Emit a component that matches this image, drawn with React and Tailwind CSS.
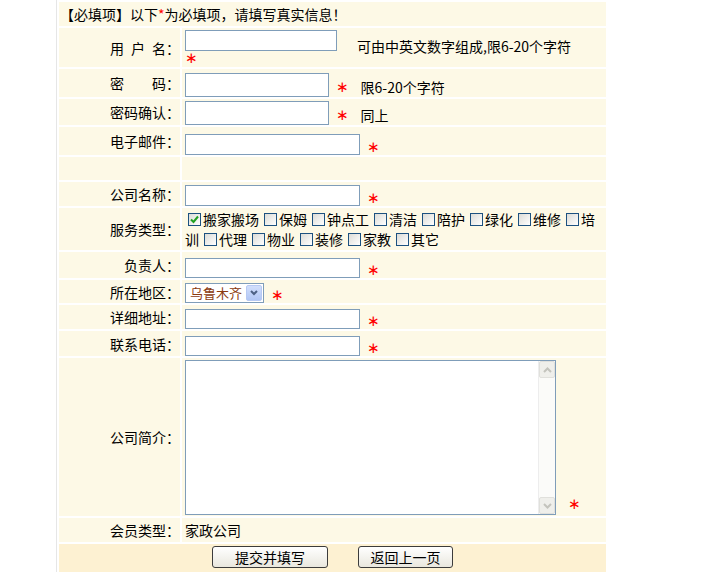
import React from "react";

const cell = "bg-[#fdf9e6]";

const Star = ({ className = "leading-[20px]" }) => (
    <span className={`font-['DejaVu_Sans',sans-serif] text-[15px] text-[#ff0000] ${className}`}>∗</span>
);

const Box = ({ w, h = 21 }) => (
    <input type="text" className="shrink-0 border border-[#7f9db9] bg-white outline-none" style={{ width: w, height: h }} />
);

const Row = ({ label, h, className = "", children }) => (
    <>
        <div className={`${cell} ${h} flex items-center justify-end whitespace-pre`}>{label}</div>
        <div className={`${cell} ${h} pl-[3px] ${className}`}>{children}</div>
    </>
);

const Check = ({ on }) => (
    <span className="mr-[2px] inline-flex h-[13px] w-[13px] shrink-0 items-center justify-center border border-[#1c5180] bg-linear-to-br from-[#dcdcd7] to-white">
        {on && (
            <svg width="9" height="9" viewBox="0 0 9 9">
                <path d="M1 4.5 L3.5 7 L8 1.5" fill="none" stroke="#21a121" strokeWidth="2" />
            </svg>
        )}
    </span>
);

const services = ["保姆", "钟点工", "清洁", "陪护", "绿化", "维修"];
const services2 = ["代理", "物业", "装修", "家教", "其它"];

const Sp = () => <span className="inline-block w-[7px]" />;

export default function App() {
    return (
        <div className="h-[572px] overflow-hidden bg-white font-['Noto_Sans_CJK_SC',sans-serif] text-[14px] leading-[20px] text-black">
            <div className="ml-[56px] w-[550px] border-l border-[#e6e6e6] pl-[2px] pt-[2px]">
                <div className="grid grid-cols-[121px_424px] gap-[2px]">
                    <div className={`${cell} col-span-2 flex h-[24px] items-center pl-[1px]`}>
                        【必填项】以下<span className="text-[#ff0000]">*</span>为必填项，请填写真实信息！
                    </div>

                    <Row label={<>用<Sp />户<Sp />名：</>} h="h-[39px]" className="pt-[2px]">
                        <div className="flex items-end">
                            <Box w={152} h={21} />
                            <span className="ml-[20px] translate-y-[5px]">可由中英文数字组成,限6-20个字符</span>
                        </div>
                        <Star className="block leading-[14px]" />
                    </Row>

                    <Row label="密　　码：" h="h-[28px]" className="flex items-end pt-[2px]">
                        <Box w={144} h={24} />
                        <Star className="ml-[7px] leading-[20px]" />
                        <span className="ml-[12px]">限6-20个字符</span>
                    </Row>

                    <Row label="密码确认：" h="h-[26px]" className="flex items-end pt-[1px]">
                        <Box w={144} h={24} />
                        <Star className="ml-[7px] leading-[20px]" />
                        <span className="ml-[12px]">同上</span>
                    </Row>

                    <Row label="电子邮件：" h="h-[28px]" className="flex items-end pt-[3px]">
                        <Box w={175} />
                        <Star className="ml-[7px] translate-y-[2px] leading-[20px]" />
                    </Row>

                    <div className={`${cell} h-[23px]`} />
                    <div className={`${cell} h-[23px]`} />

                    <Row label="公司名称：" h="h-[24px]" className="flex items-end pt-[2px]">
                        <Box w={175} />
                        <Star className="ml-[7px] translate-y-[2px] leading-[20px]" />
                    </Row>

                    <Row label="服务类型：" h="h-[42px]" className="whitespace-nowrap pt-[1px]">
                        <div className="flex items-center">
                            <span className="ml-[3px]" />
                            <Check on />
                            <span className="mr-[5px]">搬家搬场</span>
                            {services.map((s) => (
                                <React.Fragment key={s}>
                                    <Check />
                                    <span className="mr-[5px]">{s}</span>
                                </React.Fragment>
                            ))}
                            <Check />
                            <span>培</span>
                        </div>
                        <div className="flex items-center">
                            <span className="mr-[5px]">训</span>
                            {services2.map((s) => (
                                <React.Fragment key={s}>
                                    <Check />
                                    <span className="mr-[5px]">{s}</span>
                                </React.Fragment>
                            ))}
                        </div>
                    </Row>

                    <Row label="负责人：" h="h-[26px]" className="flex items-end pt-[2px]">
                        <Box w={175} h={20} />
                        <Star className="ml-[7px] translate-y-[2px] leading-[20px]" />
                    </Row>

                    <Row label="所在地区：" h="h-[23px]" className="flex items-end pt-[2px]">
                        <div className="flex h-[20px] w-[79px] shrink-0 items-center justify-between border border-[#7f9db9] bg-white p-[1px]">
                            <span className="pl-[3px] text-[13px] leading-[16px] text-[#8b3a0e]">乌鲁木齐</span>
                            <span className="flex h-[16px] w-[16px] items-center justify-center rounded-[2px] border border-[#b7c9f3] bg-linear-to-b from-[#d2dffc] to-[#b1c6f5]">
                                <svg width="8" height="6" viewBox="0 0 8 6">
                                    <path d="M1 1 L4 4 L7 1" fill="none" stroke="#4d6185" strokeWidth="2" />
                                </svg>
                            </span>
                        </div>
                        <Star className="ml-[7px] translate-y-[2px] leading-[20px]" />
                    </Row>

                    <Row label="详细地址：" h="h-[24px]" className="flex items-end pt-[2px]">
                        <Box w={175} h={20} />
                        <Star className="ml-[7px] translate-y-[2px] leading-[20px]" />
                    </Row>

                    <Row label="联系电话：" h="h-[25px]" className="flex items-end pt-[2px]">
                        <Box w={175} h={20} />
                        <Star className="ml-[7px] translate-y-[2px] leading-[20px]" />
                    </Row>

                    <Row label="公司简介：" h="h-[158px]" className="flex items-end pt-[2px]">
                        <div className="flex h-[155px] w-[371px] shrink-0 self-start border border-[#7f9db9] bg-white">
                            <div className="flex-1" />
                            <div className="flex w-[17px] flex-col justify-between border-l border-[#ededed] bg-[#fbfbf9]">
                                <span className="flex h-[17px] items-center justify-center rounded-[2px] border border-[#e0e0dc] bg-[#efefeb]">
                                    <svg width="9" height="6" viewBox="0 0 9 6">
                                        <path d="M1 5 L4.5 1.5 L8 5" fill="none" stroke="#c4c4bd" strokeWidth="2" />
                                    </svg>
                                </span>
                                <span className="flex h-[17px] items-center justify-center rounded-[2px] border border-[#e0e0dc] bg-[#efefeb]">
                                    <svg width="9" height="6" viewBox="0 0 9 6">
                                        <path d="M1 1 L4.5 4.5 L8 1" fill="none" stroke="#c4c4bd" strokeWidth="2" />
                                    </svg>
                                </span>
                            </div>
                        </div>
                        <Star className="mb-[2px] ml-[12px] leading-[20px]" />
                    </Row>

                    <Row label="会员类型：" h="h-[24px]" className="flex items-center">
                        家政公司
                    </Row>

                    <div className="col-span-2 flex h-[32px] justify-center gap-[30px] bg-[#fdf1d2] pt-[2px]">
                        <button className="h-[22px] w-[116px] rounded-[3px] border border-[#3c3c3c] bg-linear-to-b from-white to-[#e9e7de] text-[14px] leading-[18px]">提交并填写</button>
                        <button className="h-[22px] w-[95px] rounded-[3px] border border-[#3c3c3c] bg-linear-to-b from-white to-[#e9e7de] text-[14px] leading-[18px]">返回上一页</button>
                    </div>
                </div>
            </div>
        </div>
    );
}
